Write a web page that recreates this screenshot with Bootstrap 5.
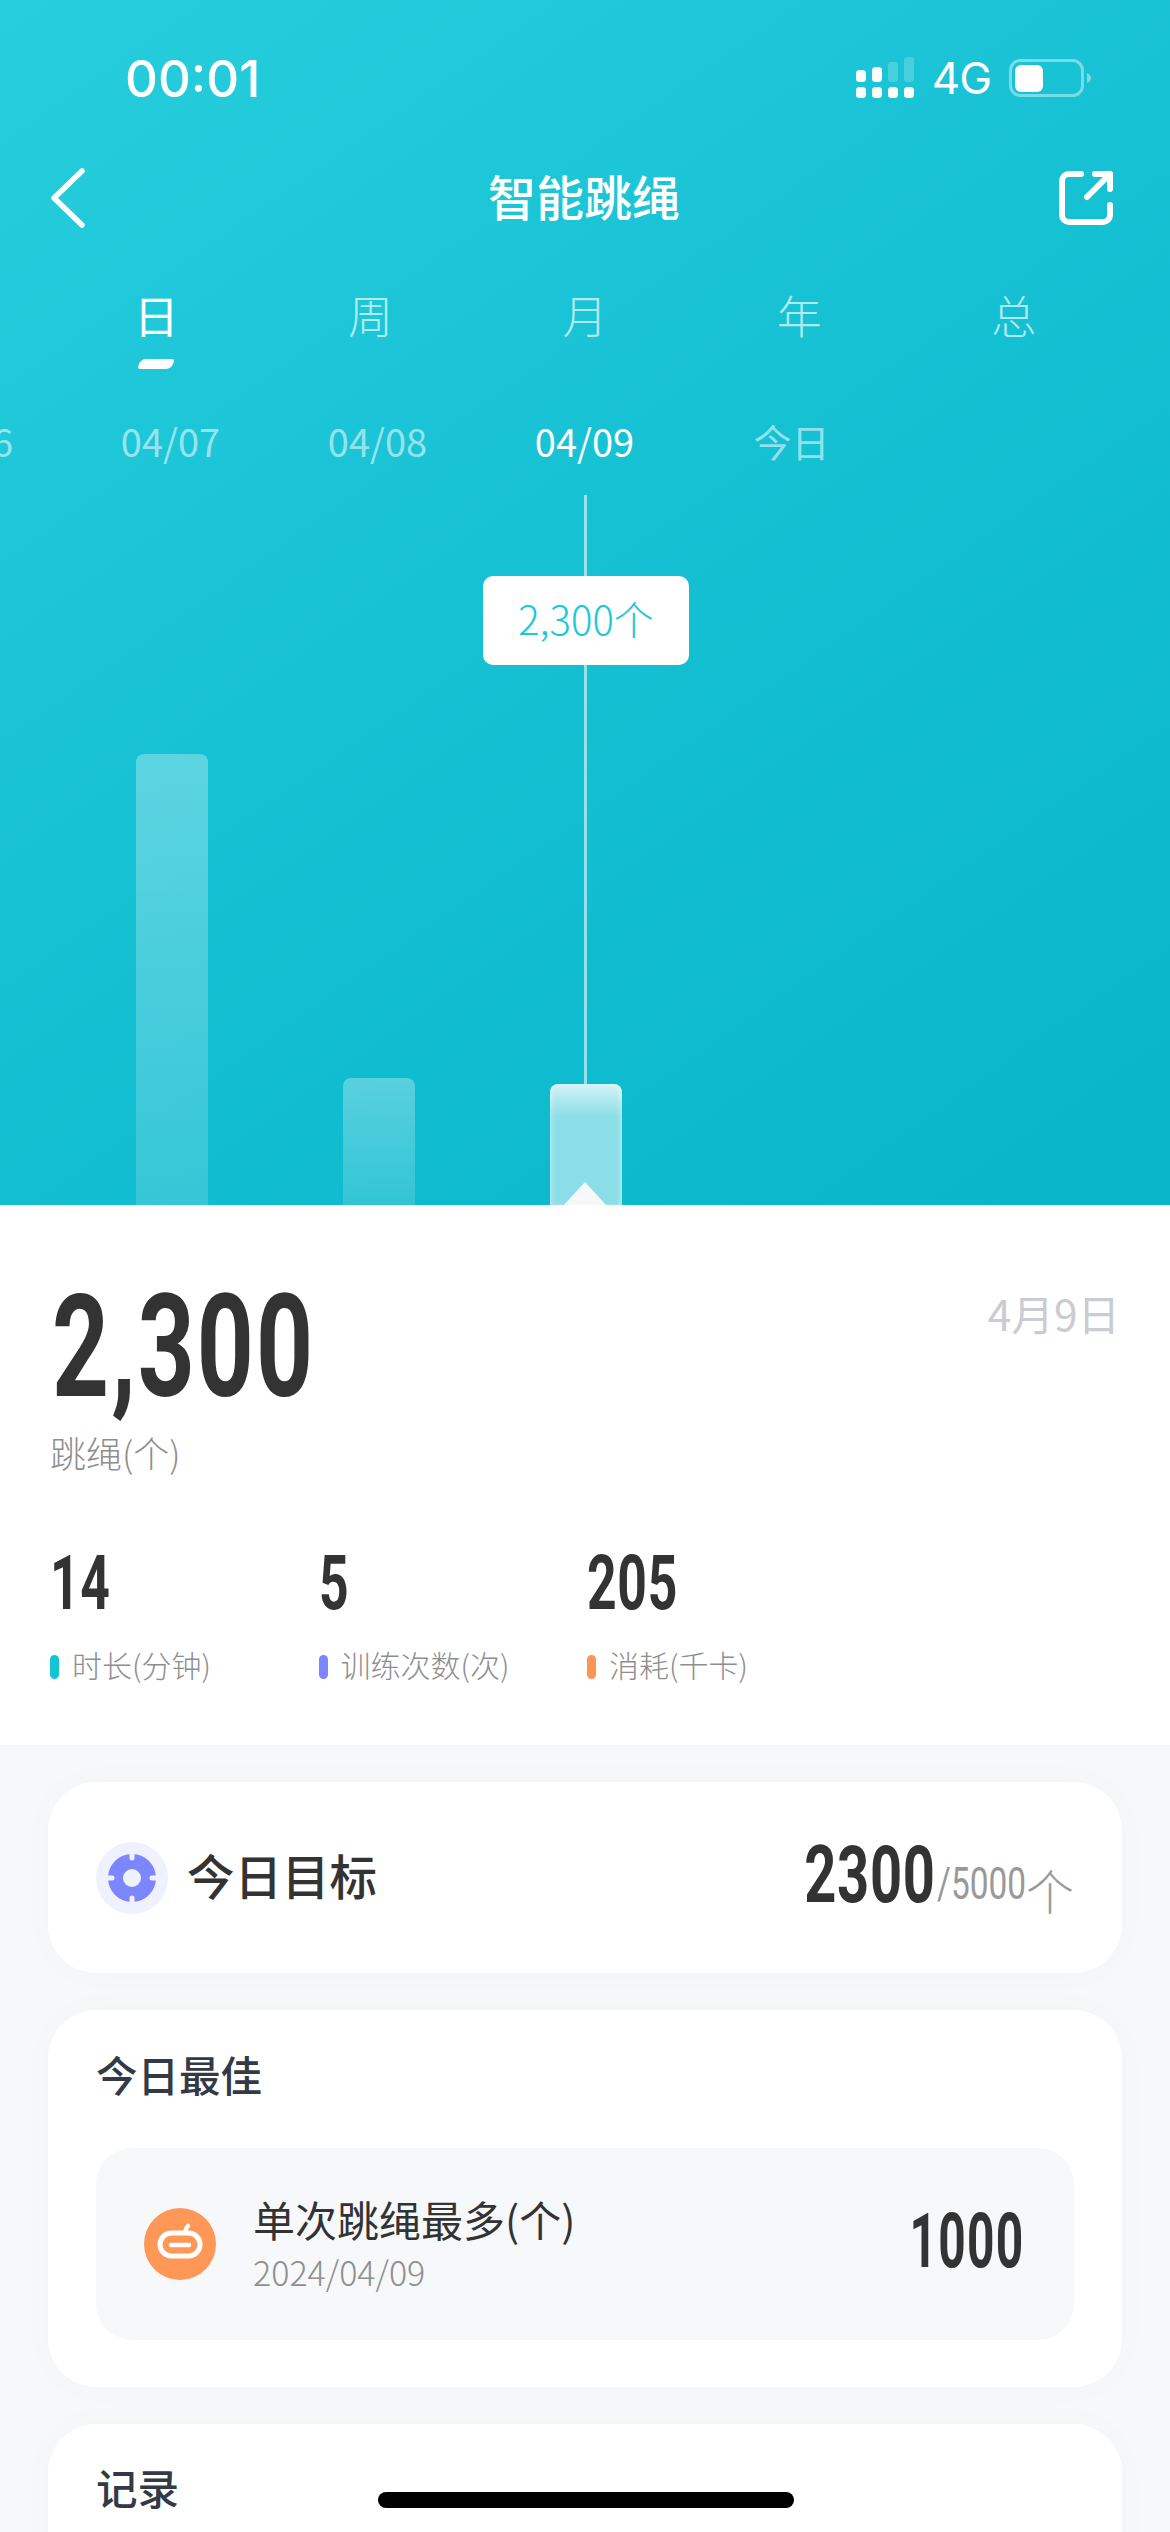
<!doctype html>
<html lang="zh-CN">
<head>
<meta charset="utf-8">
<title>智能跳绳</title>
<link href="https://cdn.jsdelivr.net/npm/bootstrap@5.3.0/dist/css/bootstrap.min.css" rel="stylesheet">
<style>
html,body{margin:0;background:#f7f8fa}
body{font-family:"Noto Sans CJK SC","Liberation Sans",sans-serif;color:#333}
.screen{width:1170px;height:2532px;overflow:hidden;background:#f7f8fa}
.hero{height:1205px;background:linear-gradient(145deg,#27cedd 0%,#15c0d3 50%,#08b5c9 100%);color:#fff}
.status-row{height:156px;padding:0 78px 0 125px}
.clock{font:500 51px/1 "Inter","Liberation Sans",sans-serif}
.net{font:400 44px/1 "Inter","Liberation Sans",sans-serif;margin:0 18px 0 18px;letter-spacing:-1px}
.nav-row{height:84px;padding:0 56px 0 54px}
.nav-side{width:56px}
.back-mark{margin-left:-4px}
.page-title{font-size:48px;font-weight:500;line-height:1;margin-top:-6px}
.tab-row{margin-top:39px;height:72px;padding:0 49px}
.tab-cell{width:214.4px;text-align:center;font-size:45px;line-height:72px;color:rgba(255,255,255,.68);font-weight:300}
.tab-active{color:#fff;font-weight:400;position:relative}
.tab-active::after{content:"";position:absolute;left:90px;bottom:-18px;width:34px;height:10px;background:#fff;border-radius:5px 3px 5px 3px;transform:skewX(-20deg)}
.date-row{margin:67px 0 0 -140px;height:46px}
.date-cell{flex:0 0 207px;text-align:center;font:400 38px/46px "Noto Sans CJK SC","Liberation Sans",sans-serif;color:rgba(255,255,255,.55)}
.date-now{color:#fff}
.plot{height:741px;padding-left:136px;gap:135px}
.bar-col{width:72px;border-radius:8px 8px 0 0;background:linear-gradient(180deg,rgba(255,255,255,.3),rgba(255,255,255,.15))}
.bar-now{background:linear-gradient(180deg,rgba(255,255,255,.82),rgba(255,255,255,.52) 32px);box-shadow:inset 4px 0 6px -3px rgba(255,255,255,.45),inset -4px 0 6px -3px rgba(255,255,255,.45)}
.guide{left:584px;top:31px;width:3px;height:589px;background:rgba(255,255,255,.55)}
.tip-box{left:483px;top:112px;width:206px;height:89px;background:#fff;border-radius:10px;color:#1cc8d6;font-size:40px;font-weight:300;line-height:84px;text-align:center}
.pointer{left:564px;bottom:0;width:42px;height:23px;background:#f7f8fa;clip-path:polygon(50% 0,100% 100%,0 100%)}
.sheet{height:540px;background:#fff;padding:93px 50px 65px}
.cond{display:inline-block;font-family:"Roboto","Liberation Sans",sans-serif;font-weight:700;color:#333;transform-origin:left center}
.big-num{font-size:142px;line-height:100px;transform:scaleX(.7);margin-left:2px;letter-spacing:3px}
.day-label{font-size:42.5px;line-height:42px;color:#c9ccd1;margin:-6px 0 0;font-weight:400}
.unit-line{margin-top:29px;font-size:36px;line-height:50px;color:#8e8e8e;font-weight:300}
.stat-row{margin-top:79px}
.stat-col{width:268.5px}
.stat-num{font-size:76px;line-height:54px;transform:scaleX(.68);letter-spacing:1px}
.stat-label{margin-top:35px;font-size:30px;line-height:30px;color:#8e8e8e;font-weight:300;gap:13px}
.stat-label .tick{margin-top:6px}
.tick{width:9px;height:24px;border-radius:5px}
.lower{padding:37px 48px 0;gap:37px}
.panel{background:#fff;border-radius:48px;box-shadow:0 0 40px rgba(40,50,70,.02)}
.goal-panel{height:191px;padding:0 48px}
.goal-name{font-size:47.5px;font-weight:500;line-height:1;margin:-6px 0 0 19px;color:#333}
.goal-num{font-size:80px;line-height:58px;transform:scaleX(.7);transform-origin:right center;letter-spacing:1px;margin-bottom:5px}
.goal-rest{font-family:"Roboto","Liberation Sans",sans-serif;font-size:44px;color:#999;line-height:1;transform:scaleX(.76);transform-origin:right center;display:inline-block;margin-left:-27px;margin-bottom:3px}
.goal-unit{font-size:48px;color:#999;line-height:1;font-weight:300;margin-bottom:-4px}
.best-panel{height:377px;padding:39px 48px 50px}
.panel-title{font-size:41.5px;line-height:50px;font-weight:500;color:#333a45}
.best-row{margin-top:49px;height:192px;background:#f7f8fa;border-radius:36px;padding:0 50px 0 48px}
.best-text{margin-left:37px}
.best-name{font-size:42px;line-height:50px;color:#333;font-weight:400;margin-top:-3px}
.best-date{margin-top:8px;font:300 34px/40px "Noto Sans CJK SC","Liberation Sans",sans-serif;color:#8f8f8f}
.best-num{font-size:76px;line-height:54px;transform:scaleX(.63);transform-origin:right center;margin-top:-6px;letter-spacing:2px}
.log-panel{height:300px;padding:38px 48px}
.home-pill{left:378px;bottom:24px;width:416px;height:16px;background:#000;border-radius:8px}
</style>
</head>
<body>
<div class="screen position-relative">
  <div class="hero d-flex flex-column">
    <div class="status-row d-flex align-items-center justify-content-between">
      <div class="clock">00:01</div>
      <div class="d-flex align-items-center">
        <svg width="58" height="42" viewBox="0 0 58 42" fill="#fff"><rect x="0" y="13" width="10" height="12" rx="3.5"/><rect x="16" y="10" width="10" height="15" rx="3.5"/><rect x="32" y="5" width="10" height="20" rx="3" opacity=".2"/><rect x="48" y="0" width="10" height="25" rx="3" opacity=".2"/><rect x="0" y="30" width="10" height="11" rx="3.5"/><rect x="16" y="30" width="10" height="11" rx="3.5"/><rect x="32" y="30" width="10" height="11" rx="3.5"/><rect x="48" y="30" width="10" height="11" rx="3.5"/></svg>
        <span class="net">4G</span>
        <svg width="83" height="38" viewBox="0 0 83 38"><rect x="1.5" y="1.5" width="72" height="35" rx="10" fill="none" stroke="#fff" stroke-opacity=".42" stroke-width="3"/><rect x="6" y="6" width="28" height="27" rx="6" fill="#fff"/><path d="M78 14c3 1 4 3 4 5s-1 4-4 5z" fill="#fff" fill-opacity=".42"/></svg>
      </div>
    </div>
    <div class="nav-row d-flex align-items-center justify-content-between">
      <div class="nav-side"><svg class="d-block back-mark" width="36" height="60" viewBox="0 0 36 60" fill="none" stroke="#fff" stroke-width="5.5" stroke-linecap="round" stroke-linejoin="round"><path d="M32 3 4 30l28 27"/></svg></div>
      <div class="page-title">智能跳绳</div>
      <div class="nav-side"><svg class="d-block" width="56" height="56" viewBox="0 0 56 56" fill="none" stroke="#fff" stroke-width="6" stroke-linecap="round" stroke-linejoin="round"><path d="M23 4H11a7 7 0 0 0-7 7v34a7 7 0 0 0 7 7h34a7 7 0 0 0 7-7V35"/><path d="M29 27 52 4"/><path d="M37 4h15v15"/></svg></div>
    </div>
    <div class="tab-row d-flex">
      <div class="tab-cell tab-active">日</div>
      <div class="tab-cell">周</div>
      <div class="tab-cell">月</div>
      <div class="tab-cell">年</div>
      <div class="tab-cell">总</div>
    </div>
    <div class="date-row d-flex">
      <div class="date-cell">04/06</div>
      <div class="date-cell">04/07</div>
      <div class="date-cell">04/08</div>
      <div class="date-cell date-now">04/09</div>
      <div class="date-cell">今日</div>
    </div>
    <div class="plot position-relative d-flex align-items-end">
      <div class="bar-col" style="height:451px"></div>
      <div class="bar-col" style="height:127px"></div>
      <div class="bar-col bar-now" style="height:121px"></div>
      <div class="guide position-absolute"></div>
      <div class="tip-box position-absolute">2,300个</div>
      <div class="pointer position-absolute"></div>
    </div>
  </div>

  <div class="sheet">
    <div class="d-flex justify-content-between align-items-start">
      <div class="cond big-num">2,300</div>
      <div class="day-label">4月9日</div>
    </div>
    <div class="unit-line">跳绳(个)</div>
    <div class="stat-row d-flex">
      <div class="stat-col"><div class="cond stat-num">14</div><div class="stat-label d-flex align-items-center"><span class="tick" style="background:#14c3d4"></span>时长(分钟)</div></div>
      <div class="stat-col"><div class="cond stat-num">5</div><div class="stat-label d-flex align-items-center"><span class="tick" style="background:#7c84ff"></span>训练次数(次)</div></div>
      <div class="stat-col"><div class="cond stat-num">205</div><div class="stat-label d-flex align-items-center"><span class="tick" style="background:#ff9555"></span>消耗(千卡)</div></div>
    </div>
  </div>

  <div class="lower d-flex flex-column">
    <div class="panel goal-panel d-flex align-items-center justify-content-between">
      <div class="d-flex align-items-center">
        <svg width="72" height="72" viewBox="0 0 72 72"><circle cx="36" cy="36" r="36" fill="#eff1ff"/><circle cx="36" cy="36" r="24" fill="#7b86ff"/><circle cx="36" cy="36" r="9" fill="#eff1ff"/><g stroke="#eff1ff" stroke-width="5" stroke-linecap="round"><path d="M36 11v5M36 56v5M11 36h5M56 36h5"/></g></svg>
        <span class="goal-name">今日目标</span>
      </div>
      <div class="d-flex align-items-end">
        <span class="cond goal-num">2300</span><span class="goal-rest">/5000</span><span class="goal-unit">个</span>
      </div>
    </div>
    <div class="panel best-panel">
      <div class="panel-title">今日最佳</div>
      <div class="best-row d-flex align-items-center">
        <svg class="flex-shrink-0" width="72" height="72" viewBox="0 0 72 72" fill="none" stroke="#fff" stroke-linecap="round" stroke-linejoin="round"><circle cx="36" cy="36" r="36" fill="#ff9757" stroke="none"/><path d="M44 27H27.5a11.5 11.5 0 0 0 0 23h17a11.5 11.5 0 0 0 0-23" stroke-width="5" transform="translate(0 -2)"/><path d="M27 37h18" stroke-width="4.5"/><path d="M44 25c-3-2-3-4 0-7" stroke-width="4.5"/></svg>
        <div class="best-text flex-grow-1">
          <div class="best-name">单次跳绳最多(个)</div>
          <div class="best-date">2024/04/09</div>
        </div>
        <div class="cond best-num">1000</div>
      </div>
    </div>
    <div class="panel log-panel">
      <div class="panel-title">记录</div>
    </div>
  </div>
  <div class="home-pill position-absolute"></div>
</div>
<script src="https://cdn.jsdelivr.net/npm/bootstrap@5.3.0/dist/js/bootstrap.bundle.min.js"></script>
</body>
</html>
